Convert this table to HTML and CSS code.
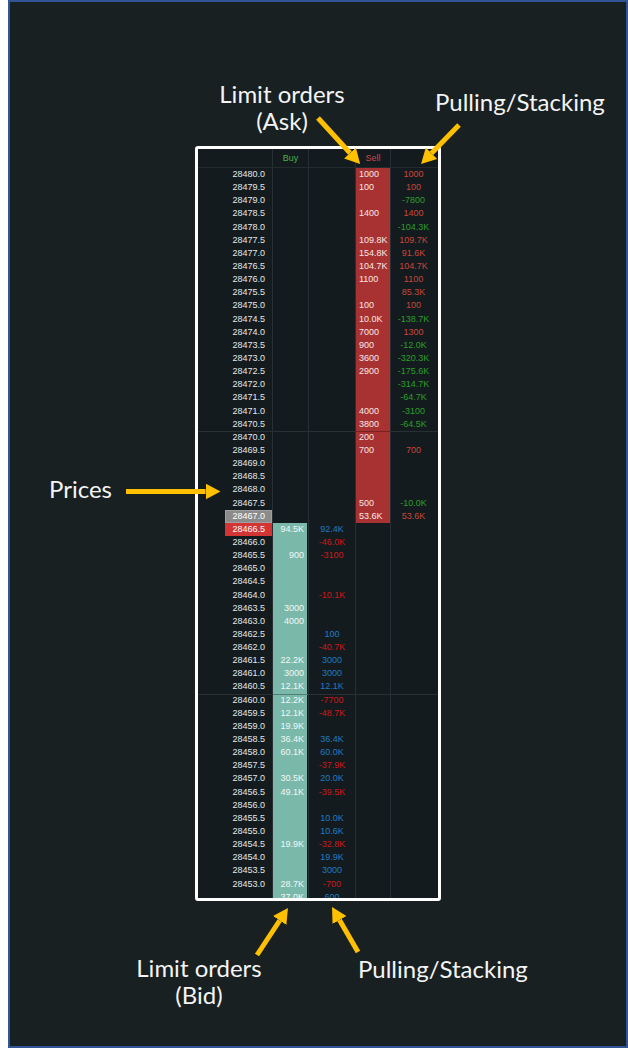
FILE: index.html
```html
<!DOCTYPE html>
<html>
<head>
<meta charset="utf-8">
<link rel="stylesheet" href="styles.css">
</head>
<body>
<div class="page">
  <div class="frame">
    <div class="dom">
      <div class="row head"><div class="c"></div><div class="c hb">Buy</div><div class="c"></div><div class="c hs">Sell</div><div class="c"></div></div>
      <div class="asks">
        <div class="row"><div class="c p">28480.0</div><div class="c b"></div><div class="c bp"></div><div class="c s">1000</div><div class="c ap r">1000</div></div>
        <div class="row"><div class="c p">28479.5</div><div class="c b"></div><div class="c bp"></div><div class="c s">100</div><div class="c ap r">100</div></div>
        <div class="row"><div class="c p">28479.0</div><div class="c b"></div><div class="c bp"></div><div class="c s"></div><div class="c ap g">-7800</div></div>
        <div class="row"><div class="c p">28478.5</div><div class="c b"></div><div class="c bp"></div><div class="c s">1400</div><div class="c ap r">1400</div></div>
        <div class="row"><div class="c p">28478.0</div><div class="c b"></div><div class="c bp"></div><div class="c s"></div><div class="c ap g">-104.3K</div></div>
        <div class="row"><div class="c p">28477.5</div><div class="c b"></div><div class="c bp"></div><div class="c s">109.8K</div><div class="c ap r">109.7K</div></div>
        <div class="row"><div class="c p">28477.0</div><div class="c b"></div><div class="c bp"></div><div class="c s">154.8K</div><div class="c ap r">91.6K</div></div>
        <div class="row"><div class="c p">28476.5</div><div class="c b"></div><div class="c bp"></div><div class="c s">104.7K</div><div class="c ap r">104.7K</div></div>
        <div class="row"><div class="c p">28476.0</div><div class="c b"></div><div class="c bp"></div><div class="c s">1100</div><div class="c ap r">1100</div></div>
        <div class="row"><div class="c p">28475.5</div><div class="c b"></div><div class="c bp"></div><div class="c s"></div><div class="c ap r">85.3K</div></div>
        <div class="row"><div class="c p">28475.0</div><div class="c b"></div><div class="c bp"></div><div class="c s">100</div><div class="c ap r">100</div></div>
        <div class="row"><div class="c p">28474.5</div><div class="c b"></div><div class="c bp"></div><div class="c s">10.0K</div><div class="c ap g">-138.7K</div></div>
        <div class="row"><div class="c p">28474.0</div><div class="c b"></div><div class="c bp"></div><div class="c s">7000</div><div class="c ap r">1300</div></div>
        <div class="row"><div class="c p">28473.5</div><div class="c b"></div><div class="c bp"></div><div class="c s">900</div><div class="c ap g">-12.0K</div></div>
        <div class="row"><div class="c p">28473.0</div><div class="c b"></div><div class="c bp"></div><div class="c s">3600</div><div class="c ap g">-320.3K</div></div>
        <div class="row"><div class="c p">28472.5</div><div class="c b"></div><div class="c bp"></div><div class="c s">2900</div><div class="c ap g">-175.6K</div></div>
        <div class="row"><div class="c p">28472.0</div><div class="c b"></div><div class="c bp"></div><div class="c s"></div><div class="c ap g">-314.7K</div></div>
        <div class="row"><div class="c p">28471.5</div><div class="c b"></div><div class="c bp"></div><div class="c s"></div><div class="c ap g">-64.7K</div></div>
        <div class="row"><div class="c p">28471.0</div><div class="c b"></div><div class="c bp"></div><div class="c s">4000</div><div class="c ap g">-3100</div></div>
        <div class="row"><div class="c p">28470.5</div><div class="c b"></div><div class="c bp"></div><div class="c s">3800</div><div class="c ap g">-64.5K</div></div>
        <div class="row tick"><div class="c p">28470.0</div><div class="c b"></div><div class="c bp"></div><div class="c s">200</div><div class="c ap"></div></div>
        <div class="row"><div class="c p">28469.5</div><div class="c b"></div><div class="c bp"></div><div class="c s">700</div><div class="c ap r">700</div></div>
        <div class="row"><div class="c p">28469.0</div><div class="c b"></div><div class="c bp"></div><div class="c s"></div><div class="c ap"></div></div>
        <div class="row"><div class="c p">28468.5</div><div class="c b"></div><div class="c bp"></div><div class="c s"></div><div class="c ap"></div></div>
        <div class="row"><div class="c p">28468.0</div><div class="c b"></div><div class="c bp"></div><div class="c s"></div><div class="c ap"></div></div>
        <div class="row"><div class="c p">28467.5</div><div class="c b"></div><div class="c bp"></div><div class="c s">500</div><div class="c ap g">-10.0K</div></div>
        <div class="row"><div class="c p"><span class="hl grey">28467.0</span></div><div class="c b"></div><div class="c bp"></div><div class="c s">53.6K</div><div class="c ap r">53.6K</div></div>
      </div>
      <div class="bids">
        <div class="row"><div class="c p"><span class="hl red">28466.5</span></div><div class="c b">94.5K</div><div class="c bp u">92.4K</div><div class="c s"></div><div class="c ap"></div></div>
        <div class="row"><div class="c p">28466.0</div><div class="c b"></div><div class="c bp d">-46.0K</div><div class="c s"></div><div class="c ap"></div></div>
        <div class="row"><div class="c p">28465.5</div><div class="c b">900</div><div class="c bp d">-3100</div><div class="c s"></div><div class="c ap"></div></div>
        <div class="row"><div class="c p">28465.0</div><div class="c b"></div><div class="c bp"></div><div class="c s"></div><div class="c ap"></div></div>
        <div class="row"><div class="c p">28464.5</div><div class="c b"></div><div class="c bp"></div><div class="c s"></div><div class="c ap"></div></div>
        <div class="row"><div class="c p">28464.0</div><div class="c b"></div><div class="c bp d">-10.1K</div><div class="c s"></div><div class="c ap"></div></div>
        <div class="row"><div class="c p">28463.5</div><div class="c b">3000</div><div class="c bp"></div><div class="c s"></div><div class="c ap"></div></div>
        <div class="row"><div class="c p">28463.0</div><div class="c b">4000</div><div class="c bp"></div><div class="c s"></div><div class="c ap"></div></div>
        <div class="row"><div class="c p">28462.5</div><div class="c b"></div><div class="c bp u">100</div><div class="c s"></div><div class="c ap"></div></div>
        <div class="row"><div class="c p">28462.0</div><div class="c b"></div><div class="c bp d">-40.7K</div><div class="c s"></div><div class="c ap"></div></div>
        <div class="row"><div class="c p">28461.5</div><div class="c b">22.2K</div><div class="c bp u">3000</div><div class="c s"></div><div class="c ap"></div></div>
        <div class="row"><div class="c p">28461.0</div><div class="c b">3000</div><div class="c bp u">3000</div><div class="c s"></div><div class="c ap"></div></div>
        <div class="row"><div class="c p">28460.5</div><div class="c b">12.1K</div><div class="c bp u">12.1K</div><div class="c s"></div><div class="c ap"></div></div>
        <div class="row tick"><div class="c p">28460.0</div><div class="c b">12.2K</div><div class="c bp d">-7700</div><div class="c s"></div><div class="c ap"></div></div>
        <div class="row"><div class="c p">28459.5</div><div class="c b">12.1K</div><div class="c bp d">-48.7K</div><div class="c s"></div><div class="c ap"></div></div>
        <div class="row"><div class="c p">28459.0</div><div class="c b">19.9K</div><div class="c bp"></div><div class="c s"></div><div class="c ap"></div></div>
        <div class="row"><div class="c p">28458.5</div><div class="c b">36.4K</div><div class="c bp u">36.4K</div><div class="c s"></div><div class="c ap"></div></div>
        <div class="row"><div class="c p">28458.0</div><div class="c b">60.1K</div><div class="c bp u">60.0K</div><div class="c s"></div><div class="c ap"></div></div>
        <div class="row"><div class="c p">28457.5</div><div class="c b"></div><div class="c bp d">-37.9K</div><div class="c s"></div><div class="c ap"></div></div>
        <div class="row"><div class="c p">28457.0</div><div class="c b">30.5K</div><div class="c bp u">20.0K</div><div class="c s"></div><div class="c ap"></div></div>
        <div class="row"><div class="c p">28456.5</div><div class="c b">49.1K</div><div class="c bp d">-39.5K</div><div class="c s"></div><div class="c ap"></div></div>
        <div class="row"><div class="c p">28456.0</div><div class="c b"></div><div class="c bp"></div><div class="c s"></div><div class="c ap"></div></div>
        <div class="row"><div class="c p">28455.5</div><div class="c b"></div><div class="c bp u">10.0K</div><div class="c s"></div><div class="c ap"></div></div>
        <div class="row"><div class="c p">28455.0</div><div class="c b"></div><div class="c bp u">10.6K</div><div class="c s"></div><div class="c ap"></div></div>
        <div class="row"><div class="c p">28454.5</div><div class="c b">19.9K</div><div class="c bp d">-32.8K</div><div class="c s"></div><div class="c ap"></div></div>
        <div class="row"><div class="c p">28454.0</div><div class="c b"></div><div class="c bp u">19.9K</div><div class="c s"></div><div class="c ap"></div></div>
        <div class="row"><div class="c p">28453.5</div><div class="c b"></div><div class="c bp u">3000</div><div class="c s"></div><div class="c ap"></div></div>
        <div class="row"><div class="c p">28453.0</div><div class="c b">28.7K</div><div class="c bp d">-700</div><div class="c s"></div><div class="c ap"></div></div>
        <div class="row"><div class="c p"></div><div class="c b">37.0K</div><div class="c bp u">600</div><div class="c s"></div><div class="c ap"></div></div>
      </div>
    </div>
  </div>

  <div class="lbl l-ask">Limit orders<br>(Ask)</div>
  <div class="lbl l-pull-top">Pulling/Stacking</div>
  <div class="lbl l-prices">Prices</div>
  <div class="lbl l-bid">Limit orders<br>(Bid)</div>
  <div class="lbl l-pull-bot">Pulling/Stacking</div>

  <svg class="arrows" width="628" height="1048" viewBox="0 0 628 1048" xmlns="http://www.w3.org/2000/svg">
    <defs>
      <marker id="head" viewBox="0 0 15 16" refX="0" refY="8" markerWidth="15" markerHeight="16" markerUnits="userSpaceOnUse" orient="auto">
        <path d="M0,0 L15,8 L0,16 Z" fill="#ffc000"/>
      </marker>
    </defs>
    <g stroke="#ffc000" stroke-width="5" fill="none" marker-end="url(#head)">
      <line x1="126" y1="491.5" x2="205.5" y2="491.5"/>
      <line x1="318" y1="118" x2="350" y2="153"/>
      <line x1="459" y1="125" x2="431.5" y2="153.3"/>
      <line x1="257" y1="955" x2="279.7" y2="920.5"/>
      <line x1="358" y1="952" x2="339.5" y2="920"/>
    </g>
  </svg>
</div>
</body>
</html>
```

FILE: styles.css
```css
* { box-sizing: border-box; }

body {
  margin: 0;
  background: #ffffff;
}

.page {
  position: relative;
  width: 628px;
  height: 1048px;
}

.frame {
  margin-left: 8px;
  width: 620px;
  height: 1048px;
  border: 2px solid #2f5597;
  background: #182022;
  padding: 144px 0 0 185px;
}

.dom {
  width: 246px;
  height: 755px;
  border: 3px solid #ffffff;
  border-radius: 3px;
  background: #141b1e;
  overflow: hidden;
  font-family: "Liberation Sans", Arial, sans-serif;
  font-size: 9px;
  color: #e3e8ea;
}

.row {
  display: grid;
  grid-template-columns: 75px 36px 47px 35px 47px;
  height: 13.15px;
  line-height: 13.15px;
}

.head {
  height: 19px;
  line-height: 18px;
  border-bottom: 1px solid #232b2f;
}

.c {
  border-right: 1px solid #283035;
  white-space: nowrap;
  overflow: visible;
}

.c:last-child { border-right: 0; }

.hb { text-align: center; color: #47b04b; }
.hs { text-align: center; color: #c9484c; }

.p { text-align: right; padding-right: 7px; }
.b { text-align: right; padding-right: 4px; color: #f1f7f5; }
.bp, .ap { text-align: center; }
.ap { padding-right: 2px; }
.s { padding-left: 3px; color: #f7e8e8; }

.hl {
  display: inline-block;
  vertical-align: top;
  width: 47px;
  height: 13.15px;
  margin-right: -7px;
  padding-right: 7px;
  text-align: right;
  color: #ffffff;
}
.hl.grey { background: #8b8b8b; box-shadow: inset 0 0 0 1px #a0a0a0; }
.hl.red { background: #d33434; }

.asks .s { background: #a83131; }
.bids .b { background: #7ab9aa; box-shadow: inset -1px 0 0 #141b1e; }

.r { color: #c9463b; }
.g { color: #2b9e2b; }
.u { color: #1f7cc0; }
.d { color: #cf1717; }

.tick .c { box-shadow: inset 0 1px 0 #283034; }
.asks .tick .s { box-shadow: inset 0 1px 0 #7a2222; }
.bids .tick .b { box-shadow: inset 0 1px 0 #4f7f74, inset -1px 0 0 #141b1e; }

.lbl {
  position: absolute;
  font-family: Lato, "Open Sans", sans-serif;
  font-size: 24px;
  line-height: 27px;
  color: #f4f4f4;
  white-space: nowrap;
}

.l-ask { left: 212px; width: 140px; top: 80px; text-align: center; }
.l-pull-top { left: 435px; top: 88px; }
.l-prices { left: 49px; top: 475px; }
.l-bid { left: 129px; width: 140px; top: 954px; text-align: center; }
.l-pull-bot { left: 358px; top: 955px; }

.arrows {
  position: absolute;
  left: 0;
  top: 0;
  pointer-events: none;
}
```
